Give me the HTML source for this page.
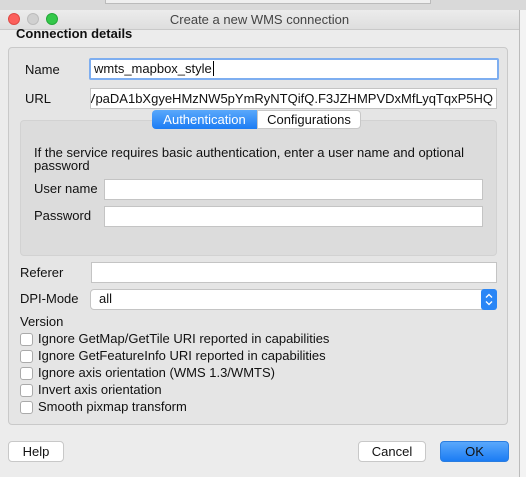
<!DOCTYPE html><html><head><style>
*{margin:0;padding:0;box-sizing:border-box}
body{width:526px;height:477px;position:relative;overflow:hidden;background:#e8e8e8;font-family:"Liberation Sans",sans-serif;font-size:13px;color:#111}
.a{position:absolute}
.f{position:absolute;background:#fff;border:1px solid #c4c4c4}
.l{position:absolute;font-size:13px}
.cb{position:absolute;left:20px;width:13px;height:13px;background:#fff;border:1px solid #aaa;border-radius:3px}
.ct{position:absolute;left:38px;font-size:13px}
.btn{position:absolute;background:#fff;border:1px solid #c8c8c8;border-radius:4px;text-align:center;line-height:19px;font-size:13px}
</style></head><body>
<div class="a" style="left:0;top:0;width:526px;height:10px;background:#d9d9d9"></div>
<div class="a" style="left:105px;top:0;width:326px;height:4px;background:#efefef;border:1px solid #bbb;border-top:none"></div>
<div class="a" style="left:519px;top:10px;width:7px;height:467px;background:#f3f3f3;border-left:1px solid #bbb"></div>
<div class="a" style="left:0;top:10px;width:519px;height:467px;background:#ececec"></div>
<div class="a" style="left:0;top:10px;width:519px;height:20px;background:linear-gradient(#ececec,#dedede);border-bottom:1px solid #c9c9c9"></div>
<div class="a" style="left:8px;top:13px;width:12px;height:12px;border-radius:6px;background:#fc605c;border:1px solid #de4a45"></div>
<div class="a" style="left:27px;top:13px;width:12px;height:12px;border-radius:6px;background:#d0d0d0;border:1px solid #bcbcbc"></div>
<div class="a" style="left:46px;top:13px;width:12px;height:12px;border-radius:6px;background:#34c84a;border:1px solid #25a83a"></div>
<div class="l" style="left:0;width:519px;top:10px;line-height:20px;text-align:center;color:#444">Create a new WMS connection</div>
<div class="l" style="left:16px;top:26px;font-weight:bold">Connection details</div>
<div class="a" style="left:8px;top:47px;width:500px;height:378px;border:1px solid #c9c9c9;border-radius:4px;background:#e5e5e5"></div>
<div class="l" style="left:25px;top:62px">Name</div>
<div class="f" style="left:89px;top:58px;width:410px;height:22px;border:2px solid #7eaef0;border-radius:2px;padding:1px 3px">wmts_mapbox_style<span style="border-left:1px solid #000;margin-left:1px"></span></div>
<div class="l" style="left:25px;top:91px">URL</div>
<div class="f" style="left:90px;top:88px;width:407px;height:21px;padding:2px 3px;overflow:hidden;white-space:nowrap;display:flex;justify-content:flex-end">VpaDA1bXgyeHMzNW5pYmRyNTQifQ.F3JZHMPVDxMfLyqTqxP5HQ</div>
<div class="a" style="left:20px;top:120px;width:477px;height:136px;background:#dcdcdc;border:1px solid #d2d2d2;border-radius:4px"></div>
<div class="a" style="left:152px;top:110px;width:105px;height:19px;background:linear-gradient(#5aa8fb,#1b7cf4);color:#fff;text-align:center;line-height:19px;border-radius:4px 0 0 4px">Authentication</div>
<div class="a" style="left:257px;top:110px;width:104px;height:19px;background:#fff;border:1px solid #c8c8c8;text-align:center;line-height:17px;border-radius:0 4px 4px 0">Configurations</div>
<div class="l" style="left:34px;top:146px;line-height:13px">If the service requires basic authentication, enter a user name and optional<br>password</div>
<div class="l" style="left:34px;top:181px">User name</div>
<div class="f" style="left:104px;top:179px;width:379px;height:21px"></div>
<div class="l" style="left:34px;top:208px">Password</div>
<div class="f" style="left:104px;top:206px;width:379px;height:21px"></div>
<div class="l" style="left:20px;top:265px">Referer</div>
<div class="f" style="left:91px;top:262px;width:406px;height:21px"></div>
<div class="l" style="left:20px;top:291px">DPI-Mode</div>
<div class="f" style="left:90px;top:289px;width:407px;height:21px;border-radius:4px;padding:1px 8px">all</div>
<svg class="a" style="left:481px;top:289px" width="16" height="21"><rect width="16" height="21" rx="3" fill="#2a86f6"/><path d="M5 8.5L8 5.5L11 8.5M5 12.5L8 15.5L11 12.5" stroke="#fff" stroke-width="1.3" fill="none"/></svg>
<div class="l" style="left:20px;top:314px">Version</div>
<div class="cb" style="top:333px"></div><div class="ct" style="top:331px">Ignore GetMap/GetTile URI reported in capabilities</div>
<div class="cb" style="top:350px"></div><div class="ct" style="top:348px">Ignore GetFeatureInfo URI reported in capabilities</div>
<div class="cb" style="top:367px"></div><div class="ct" style="top:365px">Ignore axis orientation (WMS 1.3/WMTS)</div>
<div class="cb" style="top:384px"></div><div class="ct" style="top:382px">Invert axis orientation</div>
<div class="cb" style="top:401px"></div><div class="ct" style="top:399px">Smooth pixmap transform</div>
<div class="btn" style="left:8px;top:441px;width:56px;height:21px">Help</div>
<div class="btn" style="left:358px;top:441px;width:68px;height:21px">Cancel</div>
<div class="btn" style="left:440px;top:441px;width:69px;height:21px;background:linear-gradient(#5aa8fb,#1b7cf4);border-color:#2a7de0;color:#111">OK</div>
</body></html>
